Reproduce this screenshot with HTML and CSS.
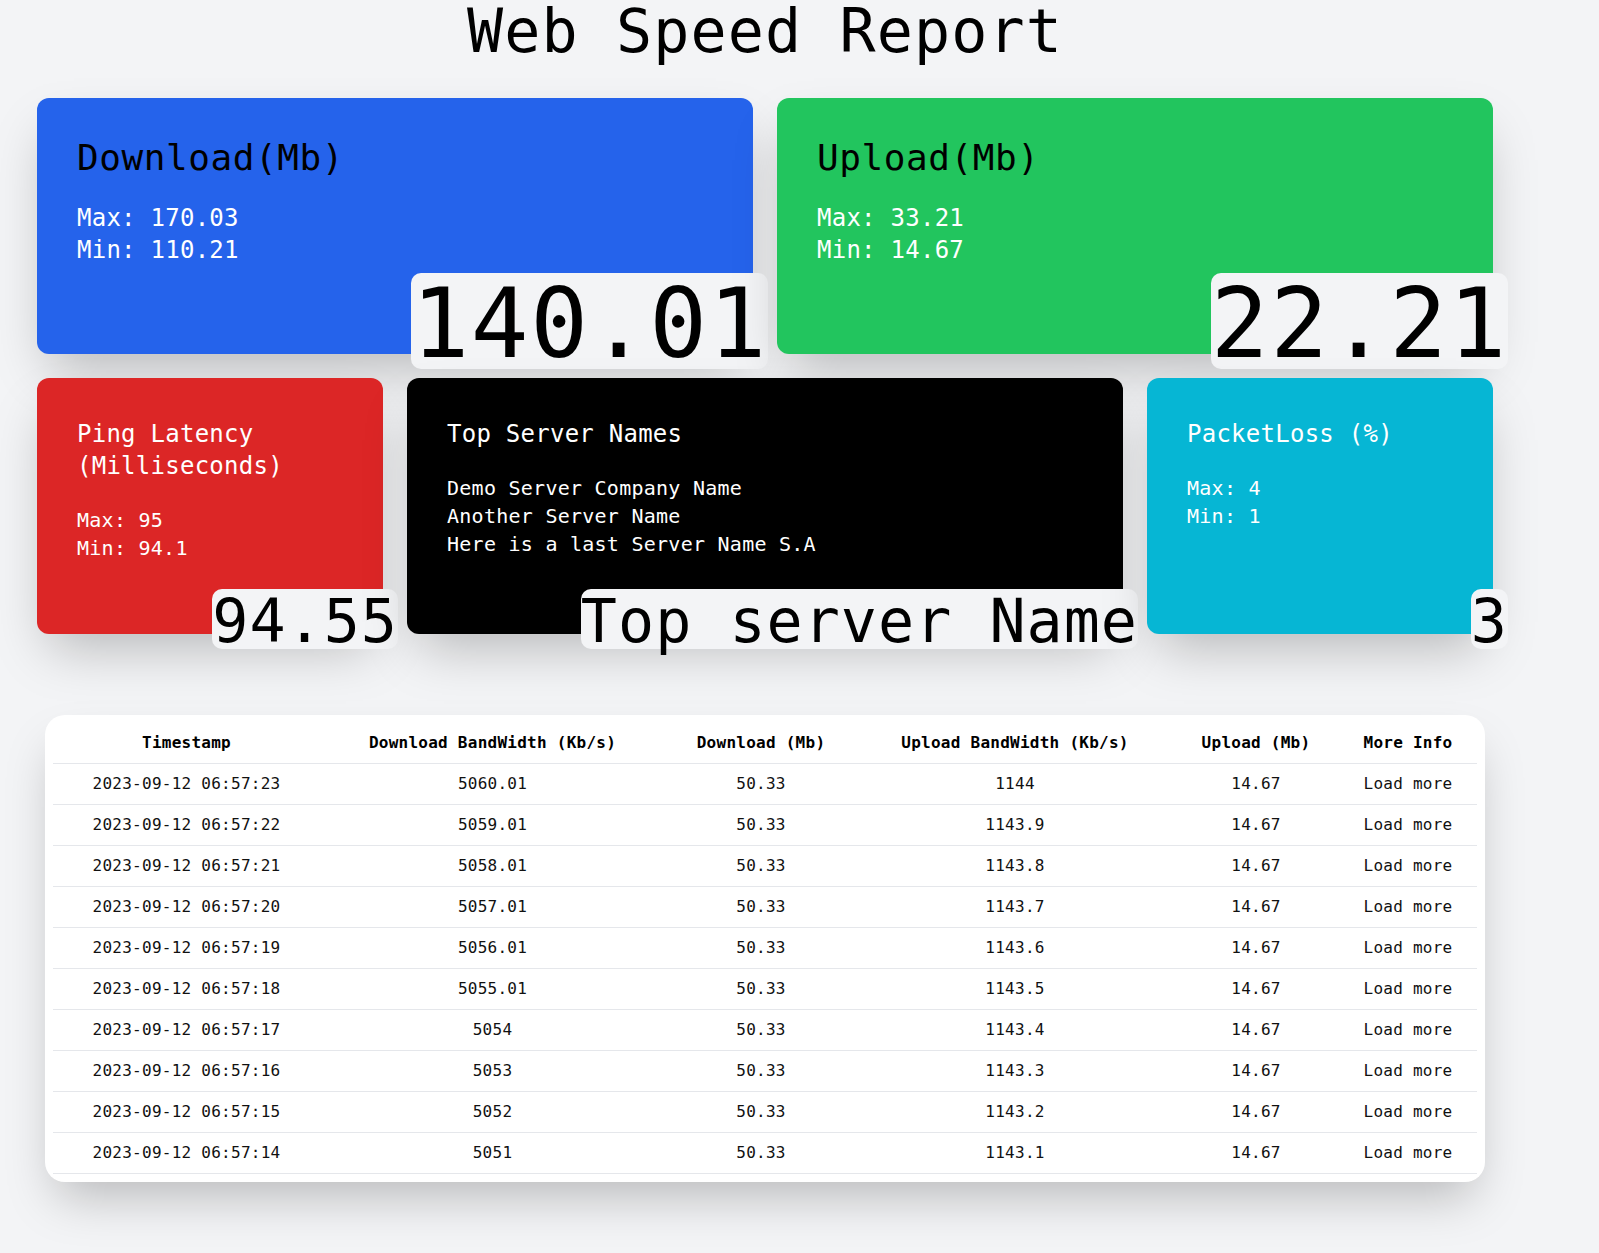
FILE: index.html
```html
<!DOCTYPE html>
<html lang="en">
<head>
<meta charset="utf-8">
<title>Web Speed Report</title>
<link rel="stylesheet" href="styles.css">
</head>
<body>
<main class="page">
  <h1 class="page-title">Web Speed Report</h1>

  <section class="grid">
    <div class="card card-blue span-2">
      <h2 class="card-title card-title-lg dark">Download(Mb)</h2>
      <ul class="stats stats-lg">
        <li>Max: 170.03</li>
        <li>Min: 110.21</li>
      </ul>
      <span class="badge badge-lg">140.01</span>
    </div>
    <div class="card card-green span-2">
      <h2 class="card-title card-title-lg dark">Upload(Mb)</h2>
      <ul class="stats stats-lg">
        <li>Max: 33.21</li>
        <li>Min: 14.67</li>
      </ul>
      <span class="badge badge-lg">22.21</span>
    </div>

    <div class="card card-red">
      <h2 class="card-title">Ping Latency (Milliseconds)</h2>
      <ul class="stats">
        <li>Max: 95</li>
        <li>Min: 94.1</li>
      </ul>
      <span class="badge badge-md">94.55</span>
    </div>
    <div class="card card-black span-2">
      <h2 class="card-title">Top Server Names</h2>
      <ul class="stats">
        <li>Demo Server Company Name</li>
        <li>Another Server Name</li>
        <li>Here is a last Server Name S.A</li>
      </ul>
      <span class="badge badge-md">Top server Name</span>
    </div>
    <div class="card card-cyan">
      <h2 class="card-title">PacketLoss (%)</h2>
      <ul class="stats">
        <li>Max: 4</li>
        <li>Min: 1</li>
      </ul>
      <span class="badge badge-md">3</span>
    </div>
  </section>

  <section class="table-card">
    <table class="report">
      <colgroup>
        <col class="c1"><col class="c2"><col class="c3"><col class="c4"><col class="c5"><col class="c6">
      </colgroup>
      <thead>
        <tr>
          <th>Timestamp</th>
          <th>Download BandWidth (Kb/s)</th>
          <th>Download (Mb)</th>
          <th>Upload BandWidth (Kb/s)</th>
          <th>Upload (Mb)</th>
          <th>More Info</th>
        </tr>
      </thead>
      <tbody>
        <tr><td>2023-09-12 06:57:23</td><td>5060.01</td><td>50.33</td><td>1144</td><td>14.67</td><td>Load more</td></tr>
        <tr><td>2023-09-12 06:57:22</td><td>5059.01</td><td>50.33</td><td>1143.9</td><td>14.67</td><td>Load more</td></tr>
        <tr><td>2023-09-12 06:57:21</td><td>5058.01</td><td>50.33</td><td>1143.8</td><td>14.67</td><td>Load more</td></tr>
        <tr><td>2023-09-12 06:57:20</td><td>5057.01</td><td>50.33</td><td>1143.7</td><td>14.67</td><td>Load more</td></tr>
        <tr><td>2023-09-12 06:57:19</td><td>5056.01</td><td>50.33</td><td>1143.6</td><td>14.67</td><td>Load more</td></tr>
        <tr><td>2023-09-12 06:57:18</td><td>5055.01</td><td>50.33</td><td>1143.5</td><td>14.67</td><td>Load more</td></tr>
        <tr><td>2023-09-12 06:57:17</td><td>5054</td><td>50.33</td><td>1143.4</td><td>14.67</td><td>Load more</td></tr>
        <tr><td>2023-09-12 06:57:16</td><td>5053</td><td>50.33</td><td>1143.3</td><td>14.67</td><td>Load more</td></tr>
        <tr><td>2023-09-12 06:57:15</td><td>5052</td><td>50.33</td><td>1143.2</td><td>14.67</td><td>Load more</td></tr>
        <tr><td>2023-09-12 06:57:14</td><td>5051</td><td>50.33</td><td>1143.1</td><td>14.67</td><td>Load more</td></tr>
      </tbody>
    </table>
  </section>
</main>
</body>
</html>
```

FILE: styles.css
```css
* {
  box-sizing: border-box;
}

html,
body {
  margin: 0;
  padding: 0;
}

body {
  background: #f3f4f6;
  color: #000;
  font-family: "DejaVu Sans Mono", "Liberation Mono", monospace;
  letter-spacing: 0.016em;
  min-height: 1253px;
}

.page {
  width: 1456px;
  margin-left: 37px;
  padding-bottom: 72px;
}

.page-title {
  margin: 0 0 37px;
  padding-top: 1px;
  font-size: 60px;
  line-height: 60px;
  font-weight: normal;
  text-align: center;
  letter-spacing: 0.019em;
}

.grid {
  display: grid;
  grid-template-columns: repeat(4, 1fr);
  gap: 24px;
}

.span-2 {
  grid-column: span 2;
}

.card {
  position: relative;
  height: 256px;
  padding: 40px;
  border-radius: 12px;
  color: #fff;
  box-shadow: 0 25px 50px -12px rgba(0, 0, 0, 0.25);
}

.card-blue { background: #2563eb; }
.card-green { background: #22c55e; }
.card-red { background: #dc2626; }
.card-black { background: #000; }
.card-cyan { background: #06b6d4; }

.card-title {
  margin: 0 0 24px;
  font-size: 24px;
  line-height: 32px;
  font-weight: normal;
}

.card-title-lg {
  font-size: 36px;
  line-height: 40px;
  letter-spacing: 0.016em;
}

.dark {
  color: #000;
}

.stats {
  list-style: none;
  margin: 0;
  padding: 0;
  font-size: 20px;
  line-height: 28px;
}

.stats-lg {
  font-size: 24px;
  line-height: 32px;
}

.badge {
  position: absolute;
  right: -15px;
  bottom: -15px;
  background: #f3f4f6;
  color: #000;
  border-radius: 10px;
  line-height: 1;
  white-space: nowrap;
  letter-spacing: 0.017em;
}

.badge-lg {
  font-size: 96px;
  height: 96px;
  padding-top: 3px;
}

.badge-md {
  font-size: 60px;
  height: 60px;
  padding-top: 2px;
}

.table-card {
  margin: 81px 0 0 8px;
  width: 1440px;
  padding: 8px;
  background: #fff;
  border-radius: 20px;
  box-shadow: 0 25px 50px -12px rgba(0, 0, 0, 0.25);
}

.report {
  width: 1424px;
  border-collapse: collapse;
  table-layout: fixed;
  font-size: 16px;
  line-height: 24px;
  color: #111;
}

.report col.c1 { width: 267px; }
.report col.c2 { width: 345px; }
.report col.c3 { width: 192px; }
.report col.c4 { width: 316px; }
.report col.c5 { width: 166px; }
.report col.c6 { width: 138px; }

.report th,
.report td {
  padding: 8px 0;
  text-align: center;
  border-bottom: 1px solid #e5e7eb;
  white-space: nowrap;
}

.report th {
  font-weight: bold;
  color: #000;
}
```
